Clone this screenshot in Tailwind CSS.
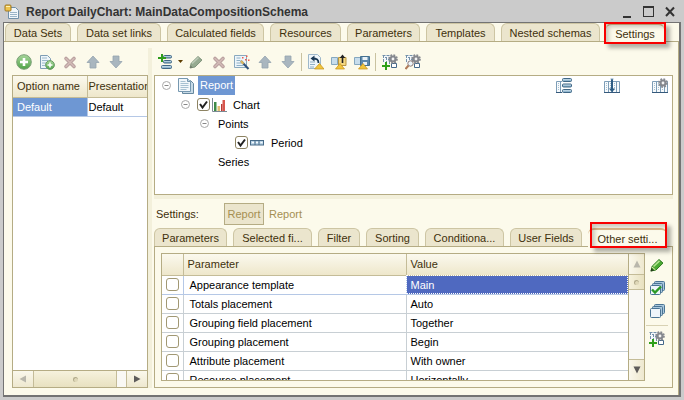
<!DOCTYPE html>
<html lang="en">
<head>
<meta charset="utf-8">
<title>Report DailyChart: MainDataCompositionSchema</title>
<script src="https://cdn.jsdelivr.net/npm/@tailwindcss/browser@4"></script>
</head>
<body class="h-screen overflow-hidden bg-[#cbcbcb] font-['Liberation_Sans',Arial,sans-serif] text-[11px] leading-4 text-[#3e300c]">
<svg class="absolute h-0 w-0" aria-hidden="true">
  <defs>
    <linearGradient id="blue" x1="0" y1="0" x2="0" y2="1"><stop offset="0" stop-color="#dcecf5"/><stop offset="1" stop-color="#6f9dbc"/></linearGradient>
    <linearGradient id="green" x1="0" y1="0" x2="0" y2="1"><stop offset="0" stop-color="#a9d79c"/><stop offset="1" stop-color="#4fa347"/></linearGradient>
    <symbol id="add" viewBox="0 0 16 16"><circle cx="8" cy="8" r="7.3" fill="url(#green)" stroke="#7c9f78"/><path d="M8 4v8M4 8h8" stroke="#fff" stroke-width="2.6"/></symbol>
    <symbol id="copy" viewBox="0 0 16 16"><path d="M1.5 1.500h7l3 3v10h-10z" fill="#eef5f9" stroke="#7e9db4"/><path d="M3 4h5M3 6.500h6M3 9h4M3 11.500h3" stroke="#9bb9cc"/><circle cx="11" cy="11" r="4.400" fill="url(#green)" stroke="#6c9c68"/><path d="M11 8.500v5M8.500 11h5" stroke="#fff" stroke-width="1.600"/></symbol>
    <symbol id="del" viewBox="0 0 16 16"><path d="M4 4.500l8 8M12 4.500l-8 8" stroke="#b9a09f" stroke-width="3.600" stroke-linecap="round"/><path d="M4 4.500l8 8M12 4.500l-8 8" stroke="#d2bab6" stroke-width="1.600" stroke-linecap="round"/></symbol>
    <symbol id="up" viewBox="0 0 16 16"><path d="M8 2l6 6.500h-3V14H5V8.500H2z" fill="#a9b6bf" stroke="#94a3ae" stroke-width=".8" stroke-linejoin="round"/></symbol>
    <symbol id="down" viewBox="0 0 16 16"><path d="M8 14l6-6.500h-3V2H5v5.500H2z" fill="#a9b6bf" stroke="#94a3ae" stroke-width=".8" stroke-linejoin="round"/></symbol>
    <symbol id="stack" viewBox="0 0 16 16"><g fill="url(#blue)" stroke="#3f6685"><rect x="5.500" y="1.500" width="8" height="2.500" rx="1"/><rect x="5.500" y="6.500" width="8" height="2.500" rx="1"/><rect x="3.500" y="11.500" width="10" height="3" rx="1"/></g><path d="M4 0v8M0 4h8" stroke="#2f9c1c" stroke-width="2"/></symbol>
    <symbol id="pencil" viewBox="0 0 16 16"><path d="M2 14l1.200-4.800L10 2.500l4 3.600-7 6.900z" fill="#96aa91" stroke="#7f957c"/><path d="M4 9.500L10.500 3.500" stroke="#bccab7" stroke-width="1.600"/><path d="M2 14l.6-2.600 2 2z" fill="#6a7466"/></symbol>
    <symbol id="edit" viewBox="0 0 16 16"><path d="M2 14l1.200-4.800L10 2.500l4 3.600-7 6.900z" fill="#4aaa32" stroke="#2f7a22"/><path d="M4.500 9.500L10.500 3.800" stroke="#b2e48e" stroke-width="1.600"/><path d="M1.500 14.500l.9-3.200 2.600 2.200z" fill="#243a1a"/><path d="M3 10l3.500 3" stroke="#e8e0b0"/></symbol>
    <symbol id="wizard" viewBox="0 0 16 16"><path d="M.5 1.500h12v12H.5z" fill="#edf5fa" stroke="#8aa9be"/><path d="M2.500 4h4M2.500 6.500h4M2.500 9h5M2.500 11.500h7" stroke="#8fb0c6"/><path d="M7 7l7.500 8" stroke="#31517a" stroke-width="2"/><path d="M7 7l2.500 2.700" stroke="#e2b95c" stroke-width="2"/><path d="M8 3h1.500v1.500H8zM12 1.500h1.500V3H12zM11 5h1.500v1.500H11zM14 5.500h1.500V7H14z" fill="#ef5a4d"/></symbol>
    <symbol id="undo" viewBox="0 0 16 16"><path d="M.5.500h9l3 3v11H.500z" fill="#f0f6fa" stroke="#9eb8ca"/><path d="M2 8h5M2 10.500h5M2 13h4" stroke="#91b0c5"/><path d="M10.500 9C10.500 5 8 4.500 4.500 4.500" fill="none" stroke="#1c3b57" stroke-width="1.800"/><path d="M6.500 1.500v6L2.500 4.500z" fill="#1c3b57"/><path d="M11.500 9.500l4.500 5.500H6.500z" fill="#f1c53c" stroke="#c59019" stroke-width=".7"/></symbol>
    <symbol id="load" viewBox="0 0 16 16"><path d="M.5 3.500h6v7H.500z" fill="#c7ddec" stroke="#86a8bf"/><path d="M7.500 3.500h7.500v8H7.500z" fill="#f4d880" stroke="#b99540"/><path d="M11.500 9V3" stroke="#222" stroke-width="1.600"/><path d="M8.700 4L11.500.500 14.300 4z" fill="#222"/><path d="M9 9.500l4.500 5.500h-9z" fill="#f1c53c" stroke="#c59019" stroke-width=".7"/></symbol>
    <symbol id="save" viewBox="0 0 16 16"><path d="M.5 3.500h6v7H.500z" fill="#c7ddec" stroke="#86a8bf"/><path d="M6.500 2.500h9v9h-9z" fill="#5d88ab" stroke="#44708f"/><path d="M8.500 3h5v3h-5zM9 8h4v3H9z" fill="#e9f2f8"/><path d="M9 9.500l4.500 5.500h-9z" fill="#f1c53c" stroke="#c59019" stroke-width=".7"/></symbol>
    <symbol id="gear" viewBox="0 0 16 16"><circle cx="8" cy="8" r="6" fill="none" stroke="#888b91" stroke-width="3.500" stroke-dasharray="2.700 2.010"/><circle cx="8" cy="8" r="4" fill="#f4f4f4" stroke="#85888e" stroke-width="3.500"/></symbol>
    <symbol id="cols" viewBox="0 0 16 16"><path d="M.5 3.500h15v11H.500z" fill="#f7fafc" stroke="#7d9db7"/><path d="M4.500 3.500v11M8.500 3.500v11M12.500 3.500v11" stroke="#7d9db7"/><path d="M0 14.500h16" stroke="#35597b"/><path d="M2 5.500h1M2 7.500h1M2 9.500h1M2 11.500h1M6 5.500h1M6 7.500h1M6 9.500h1M6 11.500h1M10 5.500h1M10 7.500h1M10 9.500h1M10 11.500h1" stroke="#a5bfd1"/></symbol>
    <symbol id="gearadd" viewBox="0 0 16 16"><path d="M1 1h7v9H1z" fill="#f4f8fb"/><path d="M.5 1.500h8M1.500 1v8M4.500 3v7M7.500 3v8M3 3.500h2M6 5.500h2" fill="none" stroke="#7391aa" stroke-dasharray="3 1"/><path d="M9.500 9.500h5v4h-5z" fill="#fff" stroke="#44688a"/><use href="#gear" x="6" y="0" width="10" height="10"/><path d="M4 8v8M0 12h8" stroke="#2fa01a" stroke-width="2"/></symbol>
    <symbol id="gearfind" viewBox="0 0 16 16"><path d="M1 1h7v9H1z" fill="#f4f8fb"/><path d="M.5 1.500h8M1.500 1v8M4.500 3v5M7.500 3v5M3 3.500h2M6 5.500h2" fill="none" stroke="#7391aa" stroke-dasharray="3 1"/><path d="M9.500 9.500h5v4h-5z" fill="#fff" stroke="#44688a"/><use href="#gear" x="6" y="0" width="10" height="10"/><path d="M3.500 11.500L.5 15" stroke="#b17b59" stroke-width="2"/><circle cx="5.500" cy="9.500" r="2.700" fill="#edf5fa" stroke="#8e7a75"/></symbol>
    <symbol id="docs" viewBox="0 0 16 16"><path d="M4.500 2.500h8l3 3v10h-11z" fill="#c7dae7" stroke="#66889f"/><path d="M.5.500h9l3 3v10H.500z" fill="#f1f7fb" stroke="#7698b0"/><path d="M9.500.500v3h3" fill="#bdd2e0" stroke="#7698b0"/><path d="M2.500 3.500h5M2.500 5.500h8M2.500 7.500h8M2.500 9.500h8M2.500 11.500h6" stroke="#a7c1d2"/></symbol>
    <symbol id="chart" viewBox="0 0 16 16"><path d="M1.500 1v13.500H16" fill="none" stroke="#7c8a94"/><path d="M3 5h2.500v9H3z" fill="#3d8a48"/><path d="M6.500 9H9v5H6.500z" fill="#e0bd72"/><path d="M10 7h1.500v7H10z" fill="#b63c36"/><path d="M11.500 3H14v11h-2.500z" fill="#d8564e"/></symbol>
    <symbol id="field" viewBox="0 0 14 6"><rect x=".5" y=".5" width="13" height="4.500" fill="#bcd5e7" stroke="#466a88"/><path d="M5 0v5M9 0v5" stroke="#466a88"/><path d="M2 2.500h2M6 2.500h2M10.500 2.500h2" stroke="#f7fbff"/></symbol>
    <symbol id="minus" viewBox="0 0 9 9"><circle cx="4.500" cy="4.500" r="4" fill="#fff" stroke="#a8a8a8"/><path d="M2.500 4.500h4" stroke="#888"/></symbol>
    <symbol id="pages" viewBox="0 0 16 16"><g fill="#a9c7dc" stroke="#4a7494"><rect x="5.500" y="1.500" width="10" height="9" rx="1"/><rect x="3.500" y="3.500" width="10" height="9" rx="1"/><rect x="1.500" y="5.500" width="10" height="9" rx="1" fill="#eef5fa"/></g></symbol>
    <symbol id="app" viewBox="0 0 16 16"><path d="M4.500 3.500h7l3 3v8h-10z" fill="#f1f6fa" stroke="#7190a8"/><path d="M6 8.500h7M6 10.500h7M6 12.500h7" stroke="#9ab4c7"/><rect x="1" y="1" width="6" height="6" rx="1" fill="#efc44c" stroke="#a07922"/><path d="M2 2.500h4" stroke="#fff3b5"/></symbol>
  </defs>
</svg>

<div class="flex h-full flex-col pt-px">
  <header class="flex h-[21px] shrink-0 items-center pr-2 pl-1 text-[#333]">
    <svg class="size-4"><use href="#app"/></svg>
    <h1 class="flex-1 truncate pl-1.5 text-[12px] font-bold">Report DailyChart: MainDataCompositionSchema</h1>
    <div class="flex gap-2.5">
      <button aria-label="Minimize" class="flex h-3 w-3 items-end px-0.5"><span class="h-0.5 w-full bg-[#333]"></span></button>
      <button aria-label="Maximize" class="h-[11px] w-[11px] border border-t-2 border-[#333]"></button>
      <button aria-label="Close" class="size-3"><svg class="size-3" viewBox="0 0 12 12"><path d="M2 1.500l8 8.500M10 1.500L2 10" stroke="#333" stroke-width="2"/></svg></button>
    </div>
  </header>

  <main class="mr-[3px] mb-[3px] ml-[3px] flex min-h-0 flex-1 flex-col border border-r-2 border-b-2 border-[#737373] bg-[#fcfaeb]">
    <div role="tablist" aria-label="Schema sections" class="flex h-[19px] shrink-0 gap-1.5 border-b border-[#b5ac84] pl-px text-center whitespace-nowrap">
      <button role="tab" class="w-[66px] rounded-t-md border border-b-0 border-[#cdc5a3] bg-[#ebe5cd]">Data Sets</button>
      <button role="tab" class="w-[84px] rounded-t-md border border-b-0 border-[#cdc5a3] bg-[#ebe5cd]">Data set links</button>
      <button role="tab" class="w-[97px] rounded-t-md border border-b-0 border-[#cdc5a3] bg-[#ebe5cd]">Calculated fields</button>
      <button role="tab" class="w-[71px] rounded-t-md border border-b-0 border-[#cdc5a3] bg-[#ebe5cd]">Resources</button>
      <button role="tab" class="w-[73px] rounded-t-md border border-b-0 border-[#cdc5a3] bg-[#ebe5cd]">Parameters</button>
      <button role="tab" class="w-[69px] rounded-t-md border border-b-0 border-[#cdc5a3] bg-[#ebe5cd]">Templates</button>
      <button role="tab" class="w-[99px] rounded-t-md border border-b-0 border-[#cdc5a3] bg-[#ebe5cd]">Nested schemas</button>
      <div class="relative h-[19px] w-[58px]">
        <button role="tab" aria-selected="true" class="h-full w-full rounded-t-md border-t-2 border-[#dcb98a] bg-[#fcfaeb] leading-4">Settings</button>
        <span class="pointer-events-none absolute -top-px -right-0.5 -bottom-0.5 -left-0.5 border-2 border-[#f80000] shadow-[4px_4px_4px_rgba(0,0,0,0.3),inset_3px_3px_4px_rgba(0,0,0,0.2)]"></span>
      </div>
    </div>

    <div class="flex min-h-0 flex-1 border-r border-[#b5ac84] pt-1.5 pr-[5px] pb-[7px] pl-2">
      <section aria-label="Options" class="flex w-[136px] shrink-0 flex-col">
        <div class="flex h-[27px] shrink-0 items-center gap-[7px] pl-1">
          <button aria-label="Add" class="size-4"><svg class="size-4"><use href="#add"/></svg></button>
          <button aria-label="Copy" class="size-4"><svg class="size-4"><use href="#copy"/></svg></button>
          <button aria-label="Delete" class="size-4"><svg class="size-4"><use href="#del"/></svg></button>
          <button aria-label="Move up" class="size-4"><svg class="size-4"><use href="#up"/></svg></button>
          <button aria-label="Move down" class="size-4"><svg class="size-4"><use href="#down"/></svg></button>
        </div>
        <div class="flex min-h-0 flex-1 flex-col border border-[#b5ac84] bg-white">
          <div class="min-h-0 flex-1 overflow-hidden">
            <table class="w-full table-fixed border-collapse whitespace-nowrap">
              <thead><tr class="h-[21px] bg-linear-to-b from-[#fbf9ee] to-[#eee7cb] text-left">
                <th class="w-[74px] border-r border-b border-[#c4bc98] px-1 font-normal">Option name</th>
                <th class="overflow-hidden border-b border-[#c4bc98] pl-px font-normal">Presentation</th>
              </tr></thead>
              <tbody><tr class="h-[19px] text-black">
                <td class="border-r border-b border-[#b5c8e6] bg-[#6e97d3] px-1 text-white">Default</td>
                <td class="border-b border-[#b5c8e6] pl-px">Default</td>
              </tr></tbody>
            </table>
          </div>
          <div class="flex h-[17px] shrink-0 border-t border-[#b5ac84] bg-[#f9f8f4]">
            <button aria-label="Scroll left" class="flex w-[21px] items-center justify-center border-r border-[#c4bc98] bg-linear-to-b from-[#faf8ec] to-[#eee8cf]"><svg class="h-2 w-2" viewBox="0 0 8 8"><path d="M7 .5v7L.500 4z" fill="#b9b7ac"/></svg></button>
            <div class="flex flex-1 items-center justify-center bg-linear-to-b from-[#f6f2dd] to-[#e8e1c0]"><span class="size-[5px] rounded-full border-t border-l border-[#b0a98a] bg-[#dfd8b8]"></span></div>
            <div class="w-2.5 border-l border-[#c4bc98]"></div>
            <button aria-label="Scroll right" class="flex w-[21px] items-center justify-center border-l border-[#c4bc98] bg-linear-to-b from-[#faf8ec] to-[#eee8cf]"><svg class="h-2 w-2" viewBox="0 0 8 8"><path d="M1 .5v7L7.500 4z" fill="#5e5c5b"/></svg></button>
          </div>
        </div>
      </section>

      <div class="mr-0.5 w-1 shrink-0 bg-[#f3f0db]"></div>

      <section aria-label="Settings structure" class="flex min-w-0 flex-1 flex-col">
        <div class="flex h-[27px] shrink-0 items-center gap-[5px] pl-1">
          <button aria-label="Add item" class="flex h-4 w-[25px] items-center"><svg class="size-4"><use href="#stack"/></svg><svg class="ml-1 h-[3px] w-[5px]" viewBox="0 0 5 3"><path d="M0 0h5L2.500 3z" fill="#5d3c00"/></svg></button>
          <div class="flex gap-[7px]">
            <button aria-label="Edit item" class="size-4"><svg class="size-4"><use href="#pencil"/></svg></button>
            <button aria-label="Delete item" class="size-4"><svg class="size-4"><use href="#del"/></svg></button>
            <button aria-label="Settings wizard" class="size-4"><svg class="size-4"><use href="#wizard"/></svg></button>
            <button aria-label="Move item up" class="size-4"><svg class="size-4"><use href="#up"/></svg></button>
            <button aria-label="Move item down" class="size-4"><svg class="size-4"><use href="#down"/></svg></button>
          </div>
          <div class="h-[18px] w-px bg-[#c9c2a0]"></div>
          <div class="flex gap-[7px] pl-px">
            <button aria-label="Restore settings" class="size-4"><svg class="size-4"><use href="#undo"/></svg></button>
            <button aria-label="Load settings" class="size-4"><svg class="size-4"><use href="#load"/></svg></button>
            <button aria-label="Save settings" class="size-4"><svg class="size-4"><use href="#save"/></svg></button>
          </div>
          <div class="h-[18px] w-px bg-[#c9c2a0]"></div>
          <div class="flex gap-[7px] pl-px">
            <button aria-label="Add user setting" class="size-4"><svg class="size-4"><use href="#gearadd"/></svg></button>
            <button aria-label="Find user setting" class="size-4"><svg class="size-4"><use href="#gearfind"/></svg></button>
          </div>
        </div>

        <div class="flex h-[120px] shrink-0 justify-between border border-[#b5ac84] bg-white text-black">
          <ul role="tree" aria-label="Report structure">
            <li class="flex h-[19px] items-center pl-[7px]"><svg class="size-[9px]"><use href="#minus"/></svg><svg class="ml-[7px] size-4"><use href="#docs"/></svg><span class="ml-1 h-full bg-[#6e97d3] px-0.5 leading-[19px] text-white">Report</span></li>
            <li class="flex h-[19px] items-center pl-[26px]"><svg class="size-[9px]"><use href="#minus"/></svg>
              <label class="ml-[7px] flex items-center"><span class="relative size-[13px]"><input type="checkbox" checked class="peer block size-[13px] appearance-none rounded-[3px] border border-[#8d8362] bg-white"><svg class="pointer-events-none absolute inset-0 hidden size-[13px] peer-checked:block" viewBox="0 0 13 13"><path d="M3 6l2.500 3.500L10 3.500" fill="none" stroke="#222" stroke-width="2"/></svg></span><svg class="ml-px size-4"><use href="#chart"/></svg><span class="ml-1.5">Chart</span></label></li>
            <li class="flex h-[19px] items-center pl-[45px]"><svg class="size-[9px]"><use href="#minus"/></svg><span class="ml-[9px]">Points</span></li>
            <li class="flex h-[19px] items-center pl-[80px]">
              <label class="flex items-center"><span class="relative size-[13px]"><input type="checkbox" checked class="peer block size-[13px] appearance-none rounded-[3px] border border-[#8d8362] bg-white"><svg class="pointer-events-none absolute inset-0 hidden size-[13px] peer-checked:block" viewBox="0 0 13 13"><path d="M3 6l2.500 3.500L10 3.500" fill="none" stroke="#222" stroke-width="2"/></svg></span><svg class="ml-0.5 h-1.5 w-3.5"><use href="#field"/></svg><span class="ml-[7px]">Period</span></label></li>
            <li class="flex h-[19px] items-center pl-[63px]">Series</li>
          </ul>
          <div class="flex gap-8 pt-0.5 pr-1">
            <svg class="size-4" viewBox="0 0 16 16"><use href="#cols"/><path d="M6 0h10v16H6z" fill="#fff"/><g fill="url(#blue)" stroke="#3f6685"><rect x="6.500" y=".5" width="9" height="3" rx="1"/><rect x="6.500" y="6" width="9" height="3" rx="1"/><rect x="6.500" y="11.500" width="9" height="3" rx="1"/></g></svg>
            <svg class="size-4" viewBox="0 0 16 16"><use href="#cols"/><path d="M8 1v11" stroke="#2d5c84" stroke-width="2"/><path d="M5 10.500h6l-3 4z" fill="#2d5c84"/><path d="M6.500 1h3" stroke="#7d9db7"/></svg>
            <svg class="size-4" viewBox="0 0 16 16"><use href="#cols"/><use href="#gear" x="6" y="0" width="10" height="10"/></svg>
          </div>
        </div>
        <div class="h-1 shrink-0 bg-[#f3f0db]"></div>

        <div class="flex h-[29px] shrink-0 items-center gap-[5px] pl-0.5">
          <span class="w-[63px]">Settings:</span>
          <button class="h-[22px] w-10 border border-[#b5ac84] bg-[#ebe5cd] text-[#a58f52]">Report</button>
          <button class="text-[#a58f52]">Report</button>
        </div>

        <div role="tablist" aria-label="Item settings" class="flex h-[19px] shrink-0 gap-1.5 text-center whitespace-nowrap">
          <button role="tab" class="h-[18px] w-[73px] rounded-t-md border border-b-0 border-[#cdc5a3] bg-[#ebe5cd]">Parameters</button>
          <button role="tab" class="h-[18px] w-[79px] rounded-t-md border border-b-0 border-[#cdc5a3] bg-[#ebe5cd]">Selected fi...</button>
          <button role="tab" class="h-[18px] w-[42px] rounded-t-md border border-b-0 border-[#cdc5a3] bg-[#ebe5cd]">Filter</button>
          <button role="tab" class="h-[18px] w-[53px] rounded-t-md border border-b-0 border-[#cdc5a3] bg-[#ebe5cd]">Sorting</button>
          <button role="tab" class="h-[18px] w-[79px] rounded-t-md border border-b-0 border-[#cdc5a3] bg-[#ebe5cd]">Conditiona...</button>
          <button role="tab" class="h-[18px] w-[72px] rounded-t-md border border-b-0 border-[#cdc5a3] bg-[#ebe5cd]">User Fields</button>
          <div class="relative z-10 h-[19px] w-[79px]">
            <button role="tab" aria-selected="true" class="h-full w-full rounded-t-md border-t-2 border-[#dcb98a] bg-[#fcfaeb] leading-4">Other setti...</button>
            <span class="pointer-events-none absolute -top-1.5 right-0 -bottom-px left-0.5 border-2 border-[#f80000] shadow-[4px_4px_4px_rgba(0,0,0,0.3),inset_3px_3px_4px_rgba(0,0,0,0.2)]"></span>
          </div>
        </div>

        <div class="-mt-px flex min-h-0 flex-1 border border-[#b5ac84] py-1.5 pr-1 pl-1.5">
          <div class="flex min-w-0 flex-1 border border-[#b5ac84] bg-white">
            <div class="min-w-0 flex-1 overflow-hidden">
              <table class="w-full table-fixed border-collapse whitespace-nowrap text-black">
                <thead><tr class="h-[21px] bg-linear-to-b from-[#fbf9ee] to-[#eee7cb] text-left text-[#3e300c]">
                  <th class="w-[21px] border-r border-b border-[#c4bc98]"></th>
                  <th class="w-[223px] border-r border-b border-[#c4bc98] pl-1 font-normal">Parameter</th>
                  <th class="border-b border-[#c4bc98] pl-1 font-normal">Value</th>
                </tr></thead>
                <tbody>
                  <tr class="h-[19px] border-b border-[#b5c8e6]"><td class="border-r border-[#b5c8e6] pl-1"><input id="p1" type="checkbox" class="block size-[13px] appearance-none rounded-[3px] border border-[#a19873] bg-white"></td><td class="border-r border-[#b5c8e6] pl-1.5"><label for="p1">Appearance template</label></td><td class="bg-[#4f69c0] pl-1 text-white outline-1 -outline-offset-1 outline-dotted outline-white">Main</td></tr>
                  <tr class="h-[19px] border-b border-[#c8cfd4]"><td class="border-r border-[#c8cfd4] pl-1"><input id="p2" type="checkbox" class="block size-[13px] appearance-none rounded-[3px] border border-[#a19873] bg-white"></td><td class="border-r border-[#c8cfd4] pl-1.5"><label for="p2">Totals placement</label></td><td class="pl-1">Auto</td></tr>
                  <tr class="h-[19px] border-b border-[#c8cfd4]"><td class="border-r border-[#c8cfd4] pl-1"><input id="p3" type="checkbox" class="block size-[13px] appearance-none rounded-[3px] border border-[#a19873] bg-white"></td><td class="border-r border-[#c8cfd4] pl-1.5"><label for="p3">Grouping field placement</label></td><td class="pl-1">Together</td></tr>
                  <tr class="h-[19px] border-b border-[#c8cfd4]"><td class="border-r border-[#c8cfd4] pl-1"><input id="p4" type="checkbox" class="block size-[13px] appearance-none rounded-[3px] border border-[#a19873] bg-white"></td><td class="border-r border-[#c8cfd4] pl-1.5"><label for="p4">Grouping placement</label></td><td class="pl-1">Begin</td></tr>
                  <tr class="h-[19px] border-b border-[#c8cfd4]"><td class="border-r border-[#c8cfd4] pl-1"><input id="p5" type="checkbox" class="block size-[13px] appearance-none rounded-[3px] border border-[#a19873] bg-white"></td><td class="border-r border-[#c8cfd4] pl-1.5"><label for="p5">Attribute placement</label></td><td class="pl-1">With owner</td></tr>
                  <tr class="h-[19px]"><td class="border-r border-[#c8cfd4] pl-1"><input id="p6" type="checkbox" class="block size-[13px] appearance-none rounded-[3px] border border-[#a19873] bg-white"></td><td class="border-r border-[#c8cfd4] pl-1.5"><label for="p6">Resource placement</label></td><td class="pl-1">Horizontally</td></tr>
                </tbody>
              </table>
            </div>
            <div class="flex w-4 shrink-0 flex-col border-l border-[#b5ac84] bg-[#f9f8f4]">
              <button aria-label="Scroll up" class="flex h-[21px] items-center justify-center border-b border-[#c4bc98] bg-linear-to-r from-[#faf8ec] to-[#eee8cf]"><svg class="size-2" viewBox="0 0 8 8"><path d="M.5 7.500h7L4 .500z" fill="#b9b7ac"/></svg></button>
              <div class="flex h-[15px] items-center justify-center border-b border-[#c4bc98] bg-linear-to-r from-[#f6f2dd] to-[#e8e1c0]"><span class="size-[5px] rounded-full border-t border-l border-[#b0a98a] bg-[#dfd8b8]"></span></div>
              <div class="flex-1"></div>
              <button aria-label="Scroll down" class="flex h-[21px] items-center justify-center border-t border-[#c4bc98] bg-linear-to-r from-[#faf8ec] to-[#eee8cf]"><svg class="size-2" viewBox="0 0 8 8"><path d="M.5.500h7L4 7.500z" fill="#5e5c5b"/></svg></button>
            </div>
          </div>
          <div class="flex w-[23px] shrink-0 flex-col items-center gap-[7px] pt-1 pl-px">
            <button aria-label="Edit" class="size-4"><svg class="size-4"><use href="#edit"/></svg></button>
            <button aria-label="Check all" class="size-4"><svg class="size-4" viewBox="0 0 16 16"><use href="#pages"/><path d="M3 9.500l3 3L12 6.500" fill="none" stroke="#2c9a25" stroke-width="2.400"/></svg></button>
            <button aria-label="Uncheck all" class="size-4"><svg class="size-4"><use href="#pages"/></svg></button>
            <div class="mt-[-1px] h-px w-full bg-[#d8d2b4]"></div>
            <button aria-label="Add to user settings" class="mt-[-2px] size-4"><svg class="size-4"><use href="#gearadd"/></svg></button>
          </div>
        </div>
      </section>
    </div>
  </main>
</div>
</body>
</html>
